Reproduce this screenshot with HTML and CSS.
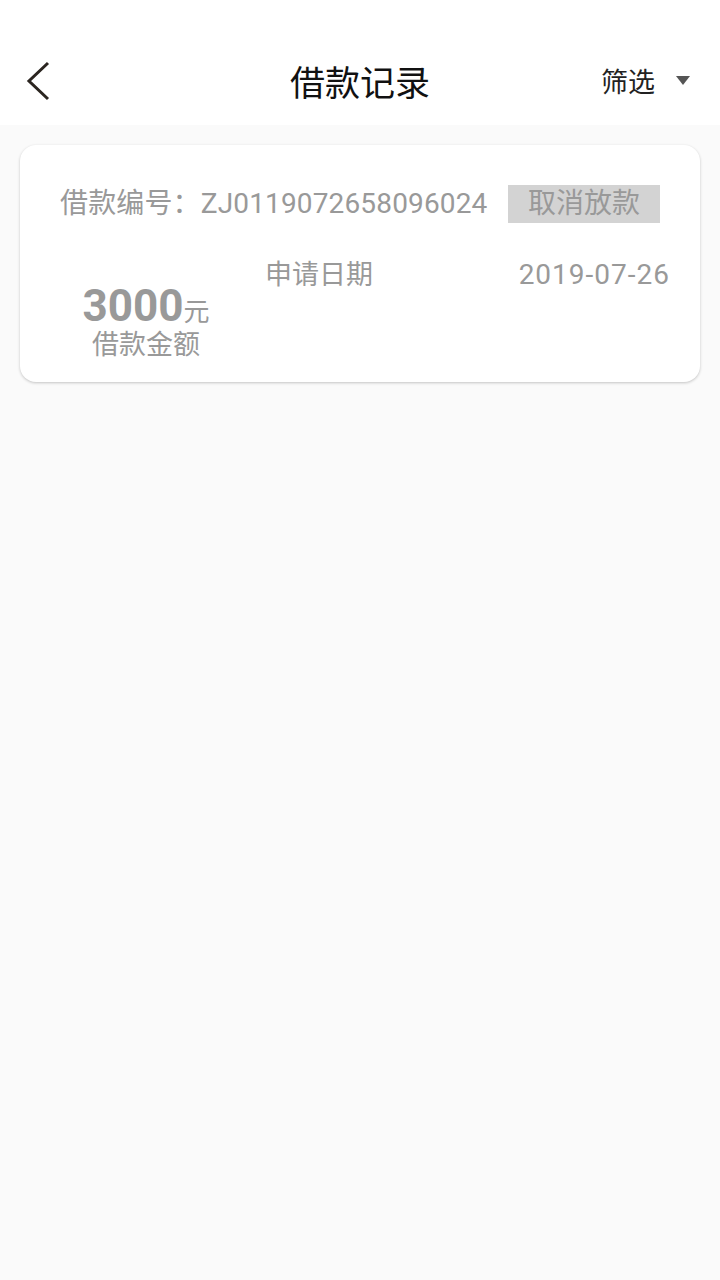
FILE: index.html
```html
<!DOCTYPE html>
<html lang="zh">
<head>
  <meta charset="UTF-8">
  <title>借款记录</title>
  <link rel="stylesheet" href="styles.css">
</head>
<body>

  <!-- 顶部导航 -->
  <div class="header">
    <div class="nav-left">
      <svg class="back" width="26" height="42" viewBox="0 0 26 42">
        <path d="M22 3 L3 21 L22 39" fill="none" stroke="#2b2520" stroke-width="3"/>
      </svg>
    </div>
    <div class="title">借款记录</div>
    <div class="nav-right">
      <span class="filter">筛选</span>
      <svg class="arrow" width="14" height="9" viewBox="0 0 14 9">
        <polygon points="0,0 14,0 7,9" fill="#555"/>
      </svg>
    </div>
  </div>

  <!-- 记录列表 -->
  <div class="list">
    <div class="card">
      <div class="row-top">
        <span class="loan-no">借款编号：ZJ0119072658096024</span>
        <span class="btn-cancel">取消放款</span>
      </div>
      <div class="row-bottom">
        <div class="amount-box">
          <div class="amount"><b>3000</b><span class="unit">元</span></div>
          <div class="amount-label">借款金额</div>
        </div>
        <div class="date-label">申请日期</div>
        <div class="date">2019-07-26</div>
      </div>
    </div>
  </div>

</body>
</html>
```

FILE: styles.css
```css
body {
  margin: 0;
  font-family: Roboto, "Noto Sans CJK SC", sans-serif;
  background: #fafafa;
  min-height: 1280px;
}

.header {
  background: white;
  padding-top: 36px;
  height: 89px;
  display: grid;
  grid-template-columns: 1fr auto 1fr;
  align-items: center;
}

.nav-left {
  padding-left: 26px;
  display: flex;
  align-items: center;
}

.title {
  font-size: 35px;
  color: #111;
}

.nav-right {
  display: flex;
  justify-content: flex-end;
  align-items: center;
  padding-right: 30px;
}

.filter {
  font-size: 27px;
  color: #222;
}

.arrow {
  margin-left: 21px;
}

.list {
  padding: 20px;
}

.card {
  background: white;
  border-radius: 16px;
  box-shadow: 0 1px 3px rgba(0,0,0,0.22);
  padding: 40px 31px 22px 40px;
}

.row-top {
  display: flex;
  align-items: center;
  justify-content: space-between;
  padding-right: 9px;
}

.loan-no {
  font-size: 28px;
  color: #999;
  line-height: 38px;
  letter-spacing: 0.15px;
}

.btn-cancel {
  background: #d3d3d3;
  color: #999;
  font-size: 28px;
  line-height: 38px;
  padding: 0 20px;
}

.row-bottom {
  display: flex;
  align-items: flex-start;
  margin-top: 35px;
  color: #999;
}

.amount-box {
  width: 172px;
  margin-top: 26px;
}

.amount {
  display: flex;
  justify-content: center;
  align-items: baseline;
  height: 44px;
}

.amount b {
  font-size: 44px;
  line-height: 44px;
}

.amount .unit {
  font-size: 26px;
  line-height: 26px;
}

.amount-label {
  margin-top: 2px;
  text-align: center;
  font-size: 27px;
  line-height: 30px;
}

.date-label {
  margin-left: 33px;
  font-size: 27px;
  line-height: 34px;
}

.date {
  margin-left: auto;
  font-size: 28px;
  line-height: 34px;
  letter-spacing: 1px;
  margin-right: -1px;
}
```
